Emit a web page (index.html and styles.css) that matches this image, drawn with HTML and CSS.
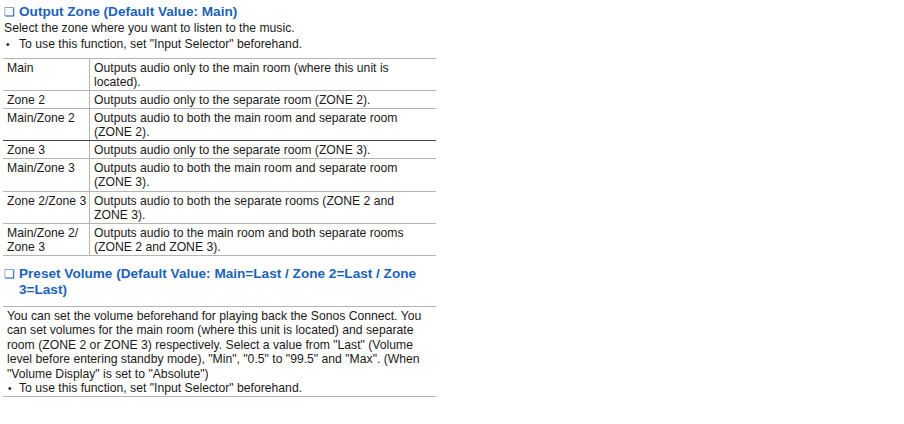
FILE: index.html
```html
<!DOCTYPE html>
<html>
<head>
<meta charset="utf-8">
<link rel="stylesheet" href="styles.css">
</head>
<body>
<div class="page">
  <h2 class="title"><span class="box">&#x274F;</span>Output Zone (Default Value: Main)</h2>
  <p class="line">Select the zone where you want to listen to the music.</p>
  <p class="line note"><span class="dot">•</span>To use this function, set "Input Selector" beforehand.</p>
  <table class="zones">
    <tr><td class="k">Main</td><td class="v">Outputs audio only to the main room (where this unit is located).</td></tr>
    <tr><td class="k">Zone 2</td><td class="v">Outputs audio only to the separate room (ZONE 2).</td></tr>
    <tr class="dark"><td class="k">Main/Zone 2</td><td class="v">Outputs audio to both the main room and separate room (ZONE 2).</td></tr>
    <tr><td class="k">Zone 3</td><td class="v">Outputs audio only to the separate room (ZONE 3).</td></tr>
    <tr class="tall"><td class="k">Main/Zone 3</td><td class="v">Outputs audio to both the main room and separate room (ZONE 3).</td></tr>
    <tr><td class="k">Zone 2/Zone 3</td><td class="v">Outputs audio to both the separate rooms (ZONE 2 and ZONE 3).</td></tr>
    <tr><td class="k">Main/Zone 2/ Zone 3</td><td class="v">Outputs audio to the main room and both separate rooms (ZONE 2 and ZONE 3).</td></tr>
  </table>
  <h2 class="title second"><span class="box">&#x274F;</span>Preset Volume (Default Value: Main=Last / Zone 2=Last / Zone 3=Last)</h2>
  <div class="desc">
    <p class="para">You can set the volume beforehand for playing back the Sonos Connect. You can set volumes for the main room (where this unit is located) and separate room (ZONE 2 or ZONE 3) respectively. Select a value from "Last" (Volume level before entering standby mode), "Min", "0.5" to "99.5" and "Max". (When "Volume Display" is set to "Absolute")</p>
    <p class="para note"><span class="dot">•</span>To use this function, set "Input Selector" beforehand.</p>
  </div>
</div>
</body>
</html>
```
FILE: styles.css
```css
html, body {
  margin: 0;
  padding: 0;
  background: #ffffff;
}
body {
  font-family: "Liberation Sans", Arial, sans-serif;
  font-size: 12.2px;
  color: #1a1a1a;
}
.page {
  width: 433px;
  padding: 4px 0 0 3px;
}
.title {
  margin: 0;
  padding-left: 16px;
  text-indent: -15px;
  font-size: 13.6px;
  line-height: 16px;
  font-weight: bold;
  color: #1b63b9;
}
.box {
  display: inline-block;
  width: 15px;
  text-indent: 0;
  font-weight: normal;
  font-family: "DejaVu Sans", sans-serif;
  font-size: 12px;
}
.line {
  margin: 0;
  padding-left: 1px;
  line-height: 16px;
}
.dot {
  display: inline-block;
  width: 15px;
  padding-left: 2px;
  box-sizing: border-box;
  font-size: 10px;
}
.zones {
  margin-top: 5px;
  width: 433px;
  border-collapse: collapse;
}
.zones td {
  border-top: 1px solid #b4b4b4;
  border-bottom: 1px solid #b4b4b4;
  padding: 2px 4px 1px 4px;
  line-height: 14px;
  vertical-align: top;
}
.zones tr.tall td {
  padding-bottom: 2px;
}
.zones td.k {
  width: 80px;
  border-right: 1px solid #b4b4b4;
  padding-right: 2px;
}
.zones td.v {
  padding-left: 4px;
  padding-right: 10px;
}
.zones tr.dark td {
  border-bottom-color: #444444;
}
.second {
  margin-top: 10px;
}
.desc {
  margin-top: 8px;
  border-top: 1px solid #b4b4b4;
  border-bottom: 1px solid #b4b4b4;
  padding: 2px 10px 0 4px;
}
.para {
  margin: 0;
  line-height: 14.4px;
}
.para .dot {
  width: 12px;
  padding-left: 1px;
}
```
